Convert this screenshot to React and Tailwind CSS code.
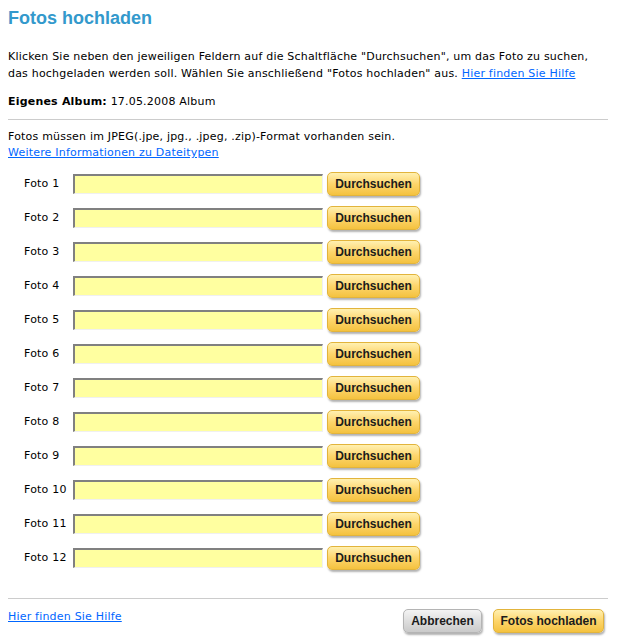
import React from 'react'

const fotos = Array.from({ length: 12 }, (_, i) => i + 1)

function GelbButton({ children, className = '' }) {
    return (
        <button
            type="button"
            className={`h-[24px] rounded-[5px] border border-[#e2b43c] bg-gradient-to-b from-[#fff0b0] via-[#fdd56a] to-[#f4c23e] text-[12px] font-bold tracking-normal text-[#1b1b1b] shadow-[1px_2px_2px_rgba(0,0,0,0.3)] ${className}`}
            style={{ fontFamily: '"Liberation Sans", Arial, sans-serif' }}
        >
            {children}
        </button>
    )
}

function GrauButton({ children, className = '' }) {
    return (
        <button
            type="button"
            className={`h-[24px] rounded-[5px] border border-[#b4b4b4] bg-gradient-to-b from-[#f4f4f4] via-[#dedede] to-[#cacaca] text-[12px] font-bold tracking-normal text-[#1b1b1b] shadow-[1px_2px_2px_rgba(0,0,0,0.3)] ${className}`}
            style={{ fontFamily: '"Liberation Sans", Arial, sans-serif' }}
        >
            {children}
        </button>
    )
}

export default function App() {
    return (
        <div
            className="w-[640px] min-h-[643px] bg-white px-2 text-[11px] tracking-[0.2px] text-black"
            style={{ fontFamily: '"DejaVu Sans", Verdana, sans-serif' }}
        >
            <h1
                className="pt-[6px] text-[18px] font-bold leading-[24px] tracking-normal text-[#3399cc]"
                style={{ fontFamily: '"Liberation Sans", Arial, sans-serif' }}
            >
                Fotos hochladen
            </h1>

            <p className="mt-[18px] leading-[17px]">
                Klicken Sie neben den jeweiligen Feldern auf die Schaltfläche "Durchsuchen", um das Foto zu suchen,
                <br />
                das hochgeladen werden soll. Wählen Sie anschließend "Fotos hochladen" aus.{' '}
                <a href="#" className="text-[#0066ff] underline">Hier finden Sie Hilfe</a>
            </p>

            <p className="mt-[11px] leading-[17px]">
                <b>Eigenes Album:</b> 17.05.2008 Album
            </p>

            <div className="mt-[9px] h-px w-[600px] bg-[#cccccc]" />

            <p className="mt-[9px] leading-[16px]">
                Fotos müssen im JPEG(.jpe, jpg., .jpeg, .zip)-Format vorhanden sein.
                <br />
                <a href="#" className="text-[#0066ff] underline">Weitere Informationen zu Dateitypen</a>
            </p>

            <div className="mt-[11px] flex flex-col gap-[10px]">
                {fotos.map((n) => (
                    <div key={n} className="flex h-[24px] items-center">
                        <span className="w-[65px] pl-4">Foto {n}</span>
                        <div className="h-[20px] w-[250px] border-t-2 border-l-2 border-b border-r border-t-[#808080] border-l-[#808080] border-b-[#f0f0f0] border-r-[#f0f0f0] bg-[#ffffa0]" />
                        <GelbButton className="ml-[4px] w-[93px]">Durchsuchen</GelbButton>
                    </div>
                ))}
            </div>

            <div className="mt-[28px] h-px w-[600px] bg-[#cccccc]" />

            <div className="mt-[10px] flex w-[596px] items-start">
                <a href="#" className="leading-[16px] text-[#0066ff] underline">Hier finden Sie Hilfe</a>
                <div className="ml-auto flex gap-[11px]">
                    <GrauButton className="w-[79px]">Abbrechen</GrauButton>
                    <GelbButton className="w-[111px]">Fotos hochladen</GelbButton>
                </div>
            </div>
        </div>
    )
}
